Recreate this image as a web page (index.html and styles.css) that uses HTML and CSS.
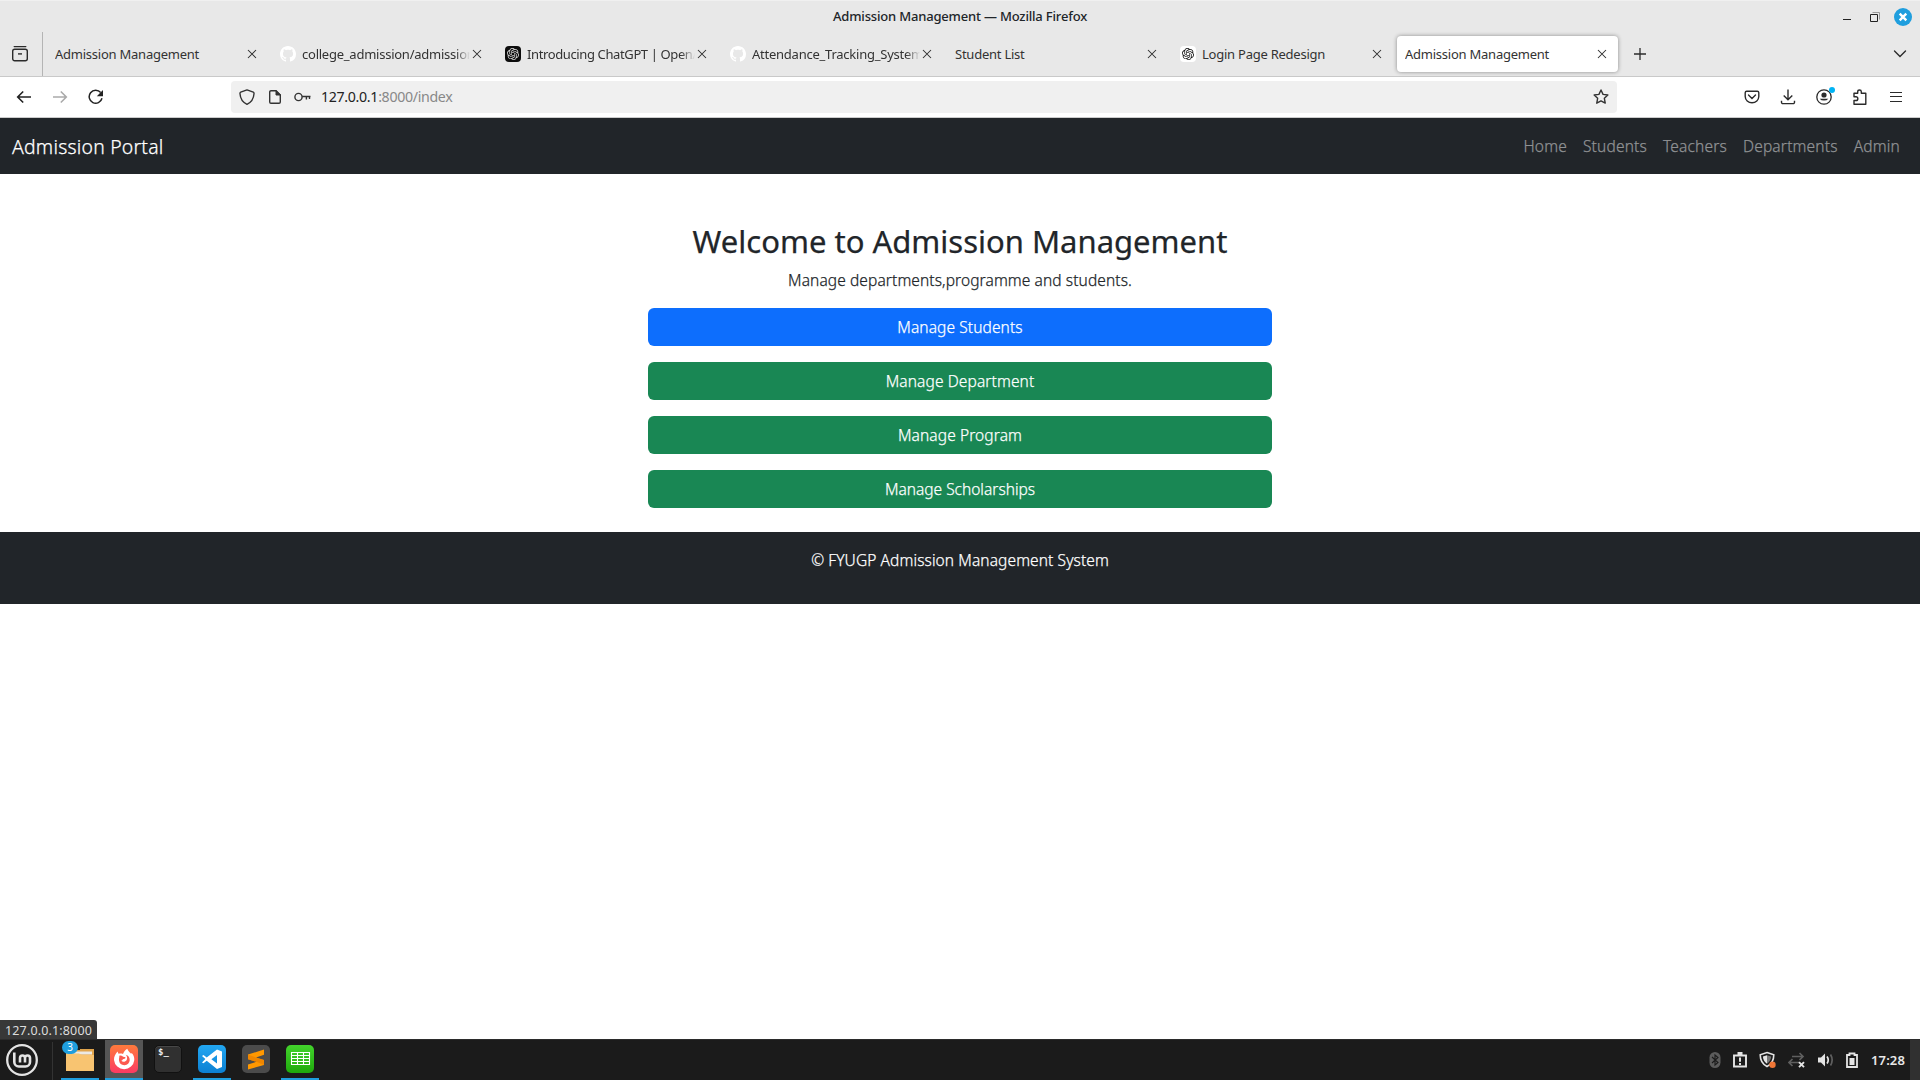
FILE: index.html
```html
<!DOCTYPE html>
<html lang="en">
<head>
<meta charset="utf-8">
<title>Admission Management</title>
<link rel="stylesheet" href="styles.css">
</head>
<body>
<svg class="defs" aria-hidden="true">
  <symbol id="x" viewBox="0 0 10 10"><path d="M1 1l8 8M9 1L1 9" fill="none" stroke="#2b2b2b" stroke-width="1.05"/></symbol>
  <symbol id="github" viewBox="0 0 16 16"><path fill="#fff" d="M8 0C3.58 0 0 3.58 0 8c0 3.54 2.29 6.53 5.47 7.59.4.07.55-.17.55-.38 0-.19-.01-.82-.01-1.49-2.01.37-2.53-.49-2.69-.94-.09-.23-.48-.94-.82-1.13-.28-.15-.68-.52-.01-.53.63-.01 1.08.58 1.23.82.72 1.21 1.87.87 2.33.66.07-.52.28-.87.51-1.07-1.78-.2-3.64-.89-3.64-3.95 0-.87.31-1.59.82-2.15-.08-.2-.36-1.02.08-2.12 0 0 .67-.21 2.2.82.64-.18 1.32-.27 2-.27s1.36.09 2 .27c1.53-1.04 2.2-.82 2.2-.82.44 1.1.16 1.92.08 2.12.51.56.82 1.27.82 2.15 0 3.07-1.87 3.75-3.65 3.95.29.25.54.73.54 1.48 0 1.07-.01 1.93-.01 2.2 0 .21.15.46.55.38A8.01 8.01 0 0 0 16 8c0-4.42-3.58-8-8-8z"/></symbol>
  <symbol id="openai" viewBox="0 0 24 24"><path fill="currentColor" d="M22.2819 9.8211a5.9847 5.9847 0 0 0-.5157-4.9108 6.0462 6.0462 0 0 0-6.5098-2.9A6.0651 6.0651 0 0 0 4.9807 4.1818a5.9847 5.9847 0 0 0-3.9977 2.9 6.0462 6.0462 0 0 0 .7427 7.0966 5.98 5.98 0 0 0 .511 4.9107 6.051 6.051 0 0 0 6.5146 2.9001A5.9847 5.9847 0 0 0 13.2599 24a6.0557 6.0557 0 0 0 5.7718-4.2058 5.9894 5.9894 0 0 0 3.9977-2.9001 6.0557 6.0557 0 0 0-.7475-7.0729zm-9.022 12.6081a4.4755 4.4755 0 0 1-2.8764-1.0408l.1419-.0804 4.7783-2.7582a.7948.7948 0 0 0 .3927-.6813v-6.7369l2.02 1.1686a.071.071 0 0 1 .038.052v5.5826a4.504 4.504 0 0 1-4.4945 4.4944zm-9.6607-4.1254a4.4708 4.4708 0 0 1-.5346-3.0137l.142.0852 4.783 2.7582a.7712.7712 0 0 0 .7806 0l5.8428-3.3685v2.3324a.0804.0804 0 0 1-.0332.0615L9.74 19.9502a4.4992 4.4992 0 0 1-6.1408-1.6464zM2.3408 7.8956a4.485 4.485 0 0 1 2.3655-1.9728V11.6a.7664.7664 0 0 0 .3879.6765l5.8144 3.3543-2.0201 1.1685a.0757.0757 0 0 1-.071 0l-4.8303-2.7865A4.504 4.504 0 0 1 2.3408 7.872zm16.5963 3.8558L13.1038 8.364 15.1192 7.2a.0757.0757 0 0 1 .071 0l4.8303 2.7913a4.4944 4.4944 0 0 1-.6765 8.1042v-5.6772a.79.79 0 0 0-.407-.667zm2.0107-3.0231l-.142-.0852-4.7735-2.7818a.7759.7759 0 0 0-.7854 0L9.409 9.2297V6.8974a.0662.0662 0 0 1 .0284-.0615l4.8303-2.7866a4.4992 4.4992 0 0 1 6.6802 4.66zM8.3065 12.863l-2.02-1.1638a.0804.0804 0 0 1-.038-.0567V6.0742a4.4992 4.4992 0 0 1 7.3757-3.4537l-.142.0805L8.704 5.459a.7948.7948 0 0 0-.3927.6813zm1.0976-2.3654l2.602-1.4998 2.6069 1.4998v2.9994l-2.5974 1.4997-2.6067-1.4997Z"/></symbol>
</svg>

<div class="titlebar">
  <div class="title">Admission Management — Mozilla Firefox</div>
  <div class="window-buttons">
    <svg width="10" height="18" viewBox="0 0 10 18"><path d="M1 11.5h8" stroke="#222" stroke-width="1"/></svg>
    <svg width="12" height="18" viewBox="0 0 12 18"><path d="M1.5 6.5h7v7h-7z" fill="none" stroke="#222"/><path d="M3.5 4.5h7v7" fill="none" stroke="#999"/></svg>
    <svg width="18" height="18" viewBox="0 0 18 18"><circle cx="9" cy="9" r="9" fill="#1f9ede"/><path d="M5.7 5.700l6.600 6.600M12.300 5.700l-6.600 6.600" stroke="#fff" stroke-width="2.400"/></svg>
  </div>
</div>

<div class="tabstrip">
  <div class="view"><svg width="18" height="18" viewBox="0 0 18 18" fill="none" stroke="#2b2b2b" stroke-width="1.4"><path d="M3.2 1.600h11.600" stroke-linecap="round"/><rect x="1.700" y="4.200" width="14.600" height="11.600" rx="2"/><path d="M7 8.900h4"/></svg></div>
  <div class="tab"><span class="label">Admission Management</span><svg class="close"><use href="#x"/></svg></div>
  <div class="tab"><svg class="favicon"><use href="#github"/></svg><span class="label faded">college_admission/admission</span><svg class="close"><use href="#x"/></svg></div>
  <div class="tab"><span class="favicon ai dark"><svg><use href="#openai"/></svg></span><span class="label faded chatgpt">Introducing ChatGPT | OpenAI</span><svg class="close"><use href="#x"/></svg></div>
  <div class="tab"><svg class="favicon"><use href="#github"/></svg><span class="label faded">Attendance_Tracking_System</span><svg class="close"><use href="#x"/></svg></div>
  <div class="tab"><span class="label">Student List</span><svg class="close"><use href="#x"/></svg></div>
  <div class="tab"><span class="favicon ai light"><svg><use href="#openai"/></svg></span><span class="label">Login Page Redesign</span><svg class="close"><use href="#x"/></svg></div>
  <div class="tab selected"><span class="label">Admission Management</span><svg class="close"><use href="#x"/></svg></div>
  <svg class="plus" width="14" height="14" viewBox="0 0 14 14"><path d="M7 1v12M1 7h12" stroke="#2b2b2b" stroke-width="1.3"/></svg>
  <svg class="chevron" width="14" height="14" viewBox="0 0 14 14"><path d="M1.5 4L7 9.5 12.500 4" fill="none" stroke="#2b2b2b" stroke-width="1.4" stroke-linecap="round"/></svg>
</div>

<div class="toolbar">
  <div class="history">
    <svg width="16" height="16" viewBox="0 0 16 16" fill="none" stroke="#222" stroke-width="1.6"><path d="M15 8H1.800M7.200 2.500L1.700 8l5.500 5.500"/></svg>
    <svg width="16" height="16" viewBox="0 0 16 16" fill="none" stroke="#aaa" stroke-width="1.6"><path d="M1 8h13.200M8.800 2.500L14.300 8l-5.500 5.500"/></svg>
    <svg width="16" height="16" viewBox="0 0 16 16"><path d="M14 9.300A6.500 6.500 0 1 1 12.700 3.600" fill="none" stroke="#222" stroke-width="1.500"/><path d="M15 1v6.200H8.800z" fill="#222"/></svg>
  </div>
  <div class="urlbar">
    <svg width="16" height="16" viewBox="0 0 16 16" fill="none" stroke="#333" stroke-width="1.4" stroke-linejoin="round"><path d="M8 .9l6.300 2.300c.7.3.8.9.7 1.600-.3 4.500-2.300 8.400-7 10.500C3.300 13.200 1.300 9.300 1 4.800c-.1-.7 0-1.300.7-1.600z"/></svg>
    <svg width="14" height="16" viewBox="0 0 14 16"><path d="M3 1.700h5l4.300 4.300v7a1.300 1.300 0 0 1-1.300 1.300H3A1.300 1.300 0 0 1 1.700 13V3A1.300 1.300 0 0 1 3 1.700z" fill="none" stroke="#333" stroke-width="1.4"/><path d="M8 1.500V6h4.500z" fill="#333" stroke="#333"/></svg>
    <svg width="17" height="16" viewBox="0 0 17 16" fill="none" stroke="#333" stroke-width="1.4"><circle cx="4.500" cy="8" r="3.600"/><path d="M8.100 7.500H16.500M12.400 7.500v3M15.500 7.500v2.500"/></svg>
    <div class="url">127.0.0.1<span>:8000/index</span></div>
    <svg class="star" width="16" height="16" viewBox="0 0 16 16"><path d="M8 1l2.050 4.400 4.800.6-3.500 3.350.9 4.800L8 11.850l-4.250 2.300.9-4.800L1.150 6l4.800-.6z" fill="none" stroke="#333" stroke-width="1.4" stroke-linejoin="round"/></svg>
  </div>
  <div class="actions">
    <svg width="16" height="16" viewBox="0 0 16 16" fill="none" stroke="#2b2b2b" stroke-width="1.4"><path d="M2.700 2.200h10.600a1.500 1.500 0 0 1 1.500 1.500v3.800a6.800 6.300 0 0 1-13.600 0V3.700a1.500 1.500 0 0 1 1.500-1.500z"/><path d="M4.500 6L8 9.500 11.500 6" stroke-linecap="round"/></svg>
    <svg width="16" height="16" viewBox="0 0 16 16" fill="none" stroke="#2b2b2b" stroke-width="1.4"><path d="M8 .5v10M3.700 6.500L8 10.700l4.300-4.200M1.500 11.700v1.600a1.300 1.300 0 0 0 1.300 1.300h10.400a1.300 1.300 0 0 0 1.300-1.300v-1.600"/></svg>
    <span class="account"><svg width="16" height="16" viewBox="0 0 16 16"><circle cx="8" cy="8" r="7.200" fill="none" stroke="#2b2b2b" stroke-width="1.3"/><circle cx="8" cy="6" r="2.600" fill="#2b2b2b"/><path d="M3.700 9.700h8.600a4.800 3.400 0 0 1-8.600 0z" fill="#2b2b2b"/></svg></span>
    <svg width="16" height="16" viewBox="0 0 16 16" fill="none" stroke="#2b2b2b" stroke-width="1.4" stroke-linejoin="round"><path d="M2 15.200V11.500h2a1.700 1.700 0 0 0 0-3.700H2V4.200h3.700V2.800a1.800 1.800 0 0 1 3.600 0v1.400h4.500v11z"/></svg>
    <svg width="16" height="16" viewBox="0 0 16 16"><path d="M2 3.500h12M2 7.500h12M2 12.500h12" stroke="#2b2b2b" stroke-width="1.2"/></svg>
  </div>
</div>

<div class="page">
  <nav class="navbar">
    <a class="brand">Admission Portal</a>
    <div class="links"><a>Home</a><a>Students</a><a>Teachers</a><a>Departments</a><a>Admin</a></div>
  </nav>
  <main class="content">
    <h1>Welcome to Admission Management</h1>
    <p class="lead">Manage departments,programme and students.</p>
    <a class="btn primary">Manage Students</a>
    <a class="btn">Manage Department</a>
    <a class="btn">Manage Program</a>
    <a class="btn scholar">Manage Scholarships</a>
  </main>
  <footer class="footer"><p>© FYUGP Admission Management System</p></footer>
  <div class="status">127.0.0.1:8000</div>
</div>

<div class="taskbar">
  <div class="menu"><svg width="32" height="32" viewBox="0 0 32 32" fill="none" stroke="#e4e4e4"><circle cx="16" cy="16" r="14.800" stroke-width="2.3"/><path d="M8.300 8.500v9.500a4.500 4.500 0 0 0 4.500 4.500h6.700a4.500 4.500 0 0 0 4.500-4.500v-4a2.500 2.500 0 0 0-5 0v4.500M19 18.500V14a2.500 2.500 0 0 0-5 0v4.500" stroke-width="2.6"/></svg></div>
  <div class="app running files"><svg width="28" height="28" viewBox="0 0 28 28"><path d="M14 4h14v8H14z" fill="#e0a44c"/><path d="M0 9V7l2-2h24v5z" fill="#e0a44c"/><path d="M2 6.500h24v3H2z" fill="#ece9e4"/><path d="M0 8.500h13l3 1.500h12v16H0z" fill="#f8c471"/></svg><span class="badge">3</span></div>
  <div class="app running active"><svg width="28" height="28" viewBox="0 0 28 28"><defs><linearGradient id="ff" x2="0" y2="1"><stop stop-color="#ff7b3c"/><stop offset="1" stop-color="#fb3a62"/></linearGradient></defs><rect width="28" height="28" rx="5" fill="url(#ff)"/><path d="M17.300 3.800c.5 2 2 3.200 3.800 4.900l.6-.7c2 2 2.700 4.400 2.600 7A10.200 10.200 0 0 1 4 15c-.1-3.500 1.300-6 3.500-8.500l1 2.300c1.600-.4 3-.4 4.500.2.800-2.200 2.200-4 4.300-5.200z" fill="#fff"/><path d="M9.300 10.800c1.200-.5 2.500-.2 3.500.8l1.200.3c1-.1 1.600.2 1.500.8-.3 1-1.600 1.300-2.600 1.600-.3.800-.8 1.300-1.600 1.500 1.600 1.500 4.400.9 5.400-.9.900-1.800.3-3.800-1-5.100 2.800.8 4.200 2.900 4 5.500a5.400 5.400 0 0 1-10.700.3c-.2-1.800.500-3.200.3-4.800z" fill="#fc5a50"/></svg></div>
  <div class="app"><span class="terminal">$_</span></div>
  <div class="app running"><svg width="28" height="28" viewBox="0 0 28 28"><defs><linearGradient id="vs" x2="0" y2="1"><stop stop-color="#22a7f2"/><stop offset="1" stop-color="#0c80d2"/></linearGradient></defs><rect width="28" height="28" rx="5" fill="url(#vs)"/><path d="M19 4.500l5 2v15.500l-5 2L8.700 15.700l-3.200 2.600L4 17.400l3.400-3.300L4 11l1.500-1 3.200 2.600zM19 10l-5.600 4.200L19 18.500z" fill="#fff" fill-rule="evenodd"/></svg></div>
  <div class="app"><svg width="28" height="28" viewBox="0 0 28 28"><rect width="28" height="28" rx="5" fill="#4b4b4b"/><path d="M6 9.500L22 4.500v5.300l-8 2.600 8 2.500v5L6 24.500v-5l8.500-2.700L6 14.200z" fill="#ff9800"/><path d="M6 14.200l8.500 2.600 7.500 3.100v-5l-8-2.500-8-2.900z" fill="#e87f00" opacity=".7"/></svg></div>
  <div class="app running"><svg width="28" height="28" viewBox="0 0 28 28"><defs><linearGradient id="calc" x2="0" y2="1"><stop stop-color="#43d42c"/><stop offset="1" stop-color="#1ea90c"/></linearGradient></defs><rect width="28" height="28" rx="5" fill="url(#calc)"/><path d="M5.500 7.500h18v12h-18zM5.500 10.500h18M5.500 13.500h18M5.500 16.500h18M11.500 7.500v12M17.500 7.500v12" fill="none" stroke="#fff" stroke-width="1.1"/></svg></div>
  <div class="tray">
    <svg width="12" height="18" viewBox="0 0 12 18"><rect x=".5" y="1" width="11" height="16" rx="5.500" fill="#5c5c5c"/><path d="M3 6l6 5.500L6 14V4l3 2.500L3 12" fill="none" stroke="#1b1b1b" stroke-width="1.1"/></svg>
    <svg width="14" height="18" viewBox="0 0 14 18"><path d="M1 4.500h12v11H1z" fill="none" stroke="#e4e4e4" stroke-width="1.9"/><path d="M4.500 1h5v3h-5z" fill="#e4e4e4"/><path d="M7 6.500v4.300M7 12v2" stroke="#e4e4e4" stroke-width="2"/></svg>
    <svg width="17" height="18" viewBox="0 0 17 18"><path d="M8 1.500l6.800 2.300c0 5-1.600 9.200-6.800 11.700C2.800 13 1.200 8.800 1.200 3.800z" fill="none" stroke="#e4e4e4" stroke-width="1.6"/><path d="M8 4.300v8.500C5.300 11 4 8.500 3.900 5.600z" fill="#e4e4e4"/><path d="M8 4.300v8.500c2.700-1.800 4-4.300 4.100-7.200z" fill="#777"/><circle cx="13.500" cy="13.700" r="3.200" fill="#f07636"/></svg>
    <svg width="17" height="18" viewBox="0 0 17 18"><path d="M4 5.500h11M11.500 2l3.500 3.500L11.500 9M11 11.500H1M4.500 8L1 11.500 4.500 15" fill="none" stroke="#5f5f5f" stroke-width="1.7"/><path d="M11 11.200l5 5M16 11.200l-5 5" stroke="#e4e4e4" stroke-width="1.9"/></svg>
    <svg width="17" height="18" viewBox="0 0 17 18"><path d="M1 6.500h3L8 2.500v13l-4-4H1z" fill="#e4e4e4"/><path d="M10 5.500q2.500 3.500 0 7" fill="none" stroke="#e4e4e4" stroke-width="1.7"/><path d="M13.500 3.500q3.300 5.500 0 11" fill="none" stroke="#5f5f5f" stroke-width="1.7"/></svg>
    <svg width="12" height="18" viewBox="0 0 12 18"><path d="M3.500 2.500h5v1.500H11v12H1V4h2.500z" fill="none" stroke="#e4e4e4" stroke-width="1.8"/><path d="M3.500 7h5v7h-5z" fill="#e4e4e4"/></svg>
    <span class="clock">17:28</span>
  </div>
  <div class="show-desktop"></div>
</div>
</body>
</html>
```
FILE: styles.css
```css
* { box-sizing: border-box; }
body {
  margin: 0;
  width: 1920px;
  height: 1080px;
  overflow: hidden;
  display: flex;
  flex-direction: column;
  background: #fff;
  font-family: "Noto Sans", "Open Sans", sans-serif;
  color: #212529;
}
svg { display: block; flex: none; }
.defs { display: none; }

/* Window frame */
.titlebar {
  height: 32px;
  flex: none;
  display: grid;
  grid-template-columns: 1fr auto 1fr;
  align-items: center;
  background: #e8e8e8;
  border-top: 1px solid #f0f0f0;
}
.title {
  grid-column: 2;
  padding-bottom: 2px;
  font-size: 13px;
  font-weight: 500;
  letter-spacing: -0.18px;
  line-height: 18px;
}
.window-buttons {
  display: flex;
  justify-content: flex-end;
  padding-right: 8px;
}
.window-buttons svg:nth-child(1) { margin-right: 17px; }
.window-buttons svg:nth-child(2) { margin-right: 13px; }

/* Tabs */
.tabstrip {
  height: 45px;
  flex: none;
  display: flex;
  background: #e8e8e8;
  border-bottom: 1px solid #c9c9c9;
}
.view {
  width: 43px;
  margin-right: 2px;
  padding: 13px 0 0 11px;
  border-right: 1px solid #b4b4b4;
}
.tab {
  width: 221px;
  height: 36px;
  margin: 4px 2px;
  padding-left: 8px;
  border-radius: 4px;
  display: flex;
  align-items: center;
  font-size: 13px;
  letter-spacing: -0.24px;
  color: #333;
}
.selected {
  background: #fff;
  box-shadow: 0 0 4px rgba(0, 0, 0, .4);
}
.label { flex: 1; min-width: 0; overflow: hidden; white-space: nowrap; }
.faded {
  -webkit-mask-image: linear-gradient(to left, transparent, #000 14px);
  mask-image: linear-gradient(to left, transparent, #000 14px);
}
.chatgpt { letter-spacing: -0.38px; }
.favicon { width: 16px; height: 16px; margin-right: 6px; flex: none; }
.ai { display: flex; align-items: center; justify-content: center; border-radius: 4px; }
.ai svg { width: 12px; height: 12px; }
.dark { background: #0d0d0d; color: #ddd; }
.light { background: #fff; color: #111; }
.close { width: 10px; height: 10px; margin: 0 11px 0 2px; }
.plus { margin: 15px 0 0 13px; }
.chevron { margin: 15px 13px 0 auto; }

/* Navigation toolbar */
.toolbar {
  height: 41px;
  flex: none;
  display: flex;
  align-items: center;
  background: #fff;
  border-bottom: 1px solid #ccc;
}
.history { width: 231px; padding-left: 16px; display: flex; gap: 20px; }
.urlbar {
  width: 1386px;
  height: 32px;
  padding: 0 8px;
  display: flex;
  align-items: center;
  gap: 12px;
  border-radius: 4px;
  background: #f0f0f0;
}
.urlbar svg:first-child { margin-right: 1px; }
.url { margin-left: -2px; padding-bottom: 1px; font-size: 14.2px; letter-spacing: -0.33px; color: #222; }
.url span { color: #888; }
.star { margin-left: auto; }
.actions {
  margin-left: auto;
  padding-right: 16px;
  display: flex;
  gap: 20px;
}
.account { position: relative; }
.account::after {
  content: "";
  position: absolute;
  top: -2px;
  right: -3px;
  width: 6px;
  height: 6px;
  border-radius: 50%;
  background: #00b3f4;
}

/* Web page */
.page { position: relative; flex: 1; min-height: 0; -webkit-text-stroke: .25px currentColor; }
.navbar {
  height: 56px;
  padding: 0 12px;
  display: flex;
  align-items: center;
  justify-content: space-between;
  background: #212529;
  font-weight: 300;
}
.brand { color: #fff; font-size: 19.4px; letter-spacing: .22px; }
.links { display: flex; font-size: 15.5px; letter-spacing: .18px; color: #909294; }
.links a { padding: 0 8px; }
.content {
  width: 624px;
  margin: 0 auto;
  padding: 48px 0 24px;
  text-align: center;
  font-size: 15.5px;
  line-height: 24px;
}
.content h1 {
  margin: 0 0 8px;
  font-size: 31px;
  font-weight: 400;
  line-height: 38.4px;
}
.lead { margin: 0 0 16px; font-weight: 300; letter-spacing: .1px; }
.btn {
  display: block;
  height: 38px;
  line-height: 38px;
  border-radius: 6px;
  background: #198754;
  color: #fff;
  font-weight: 300;
  letter-spacing: .11px;
}
.btn + .btn { margin-top: 16px; }
.primary { background: #0d6efd; }
.scholar { letter-spacing: 0; }
.footer {
  height: 72px;
  padding-top: 16px;
  background: #212529;
  color: #fff;
  text-align: center;
  font-size: 15.5px;
  font-weight: 300;
  line-height: 24px;
  letter-spacing: .1px;
}
.footer p { margin: 0; }
.status {
  position: absolute;
  left: 0;
  bottom: 0;
  width: 97px;
  height: 19px;
  padding-left: 5px;
  border-top-right-radius: 3px;
  background: #383838;
  color: #ddd;
  font-size: 12.5px;
  letter-spacing: .15px;
  line-height: 21px;
  -webkit-text-stroke: 0;
}

/* Desktop panel */
.taskbar {
  height: 41px;
  flex: none;
  display: flex;
  background: #1b1b1b;
  border-top: 1px solid #2b2b2b;
}
.menu { width: 53px; margin: 2px 8px 0 0; padding: 2px 0 0 6px; border-right: 1px solid #333; }
.app {
  position: relative;
  width: 38px;
  margin-right: 6px;
  display: flex;
  justify-content: center;
  padding-top: 5px;
}
.running { border-bottom: 2px solid #1f9ede; }
.active { background: #555; }
.badge {
  position: absolute;
  left: 1px;
  top: 1px;
  width: 16px;
  height: 13px;
  border-radius: 7px;
  background: #1f9ede;
  color: #fff;
  font-size: 10px;
  line-height: 13px;
  text-align: center;
}
.terminal {
  width: 28px;
  height: 28px;
  padding-left: 3px;
  border: 1px solid #111;
  border-radius: 5px;
  background: #303030;
  box-shadow: inset 0 1px #484848;
  color: #eee;
  font: bold 9px/12px "DejaVu Sans Mono", monospace;
}
.tray { margin-left: auto; display: flex; align-items: center; gap: 12px; }
.clock {
  margin-left: 1px;
  color: #e8e8e8;
  font-size: 13px;
  font-weight: 600;
  letter-spacing: .13px;
}
.show-desktop { width: 10px; margin-left: 5px; background: #303030; }
```
